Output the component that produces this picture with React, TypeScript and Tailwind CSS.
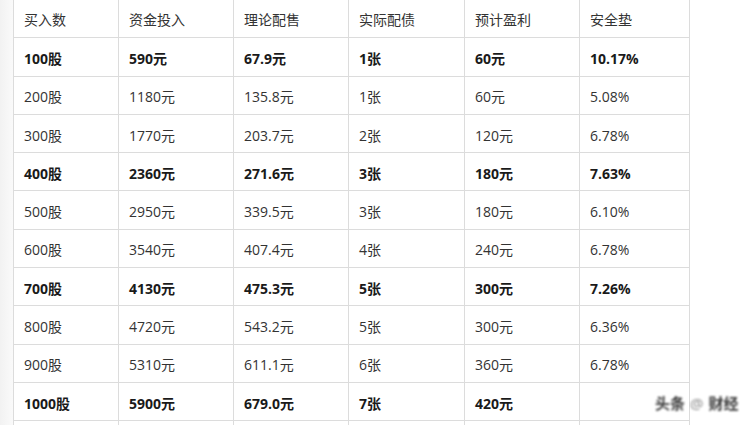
import React from "react";

const headers = ["买入数", "资金投入", "理论配售", "实际配债", "预计盈利", "安全垫"];
const rows: { c: string[]; b: boolean }[] = [
  { c: ["100股", "590元", "67.9元", "1张", "60元", "10.17%"], b: true },
  { c: ["200股", "1180元", "135.8元", "1张", "60元", "5.08%"], b: false },
  { c: ["300股", "1770元", "203.7元", "2张", "120元", "6.78%"], b: false },
  { c: ["400股", "2360元", "271.6元", "3张", "180元", "7.63%"], b: true },
  { c: ["500股", "2950元", "339.5元", "3张", "180元", "6.10%"], b: false },
  { c: ["600股", "3540元", "407.4元", "4张", "240元", "6.78%"], b: false },
  { c: ["700股", "4130元", "475.3元", "5张", "300元", "7.26%"], b: true },
  { c: ["800股", "4720元", "543.2元", "5张", "300元", "6.36%"], b: false },
  { c: ["900股", "5310元", "611.1元", "6张", "360元", "6.78%"], b: false },
  { c: ["1000股", "5900元", "679.0元", "7张", "420元", ""], b: true },
  { c: ["", "", "", "", "", ""], b: false },
];
const widths = ["w-[105px]", "w-[115px]", "w-[115px]", "w-[116px]", "w-[115px]", "w-[110px]"];

export default function App() {
  return (
    <div
      className="relative w-[744px] h-[425px] overflow-hidden bg-white flex"
      style={{ fontFamily: '"Open Sans", "Noto Sans CJK SC", sans-serif' }}
    >
      <div className="w-[13px] shrink-0 bg-gradient-to-r from-[#f2f2f2] to-[#fafafa]" />
      <div className="-mt-px">
        <table className="border-collapse table-fixed text-[14px] text-[#333]">
          <tbody>
            <tr className="h-[38.3px]">
              {headers.map((h, i) => (
                <td key={i} className={`${widths[i]} border border-[#dcdcdc] pl-[10px] pt-[1px] align-middle`}>
                  {h}
                </td>
              ))}
            </tr>
            {rows.map((r, ri) => (
              <tr key={ri} className="h-[38.3px]">
                {r.c.map((v, i) => (
                  <td
                    key={i}
                    className={`border border-[#dcdcdc] pl-[10px] pt-[3px] align-middle ${r.b ? "font-bold text-[#1a1a1a]" : ""}`}
                  >
                    {v}
                  </td>
                ))}
              </tr>
            ))}
          </tbody>
        </table>
      </div>
      <div className="absolute left-[655px] top-[392px] flex items-center gap-[5px] whitespace-nowrap text-[15px] font-bold text-[#222] blur-[1px] opacity-90">
        <span>头条</span>
        <span className="text-[#777] font-normal">@</span>
        <span>财经</span>
      </div>
    </div>
  );
}
